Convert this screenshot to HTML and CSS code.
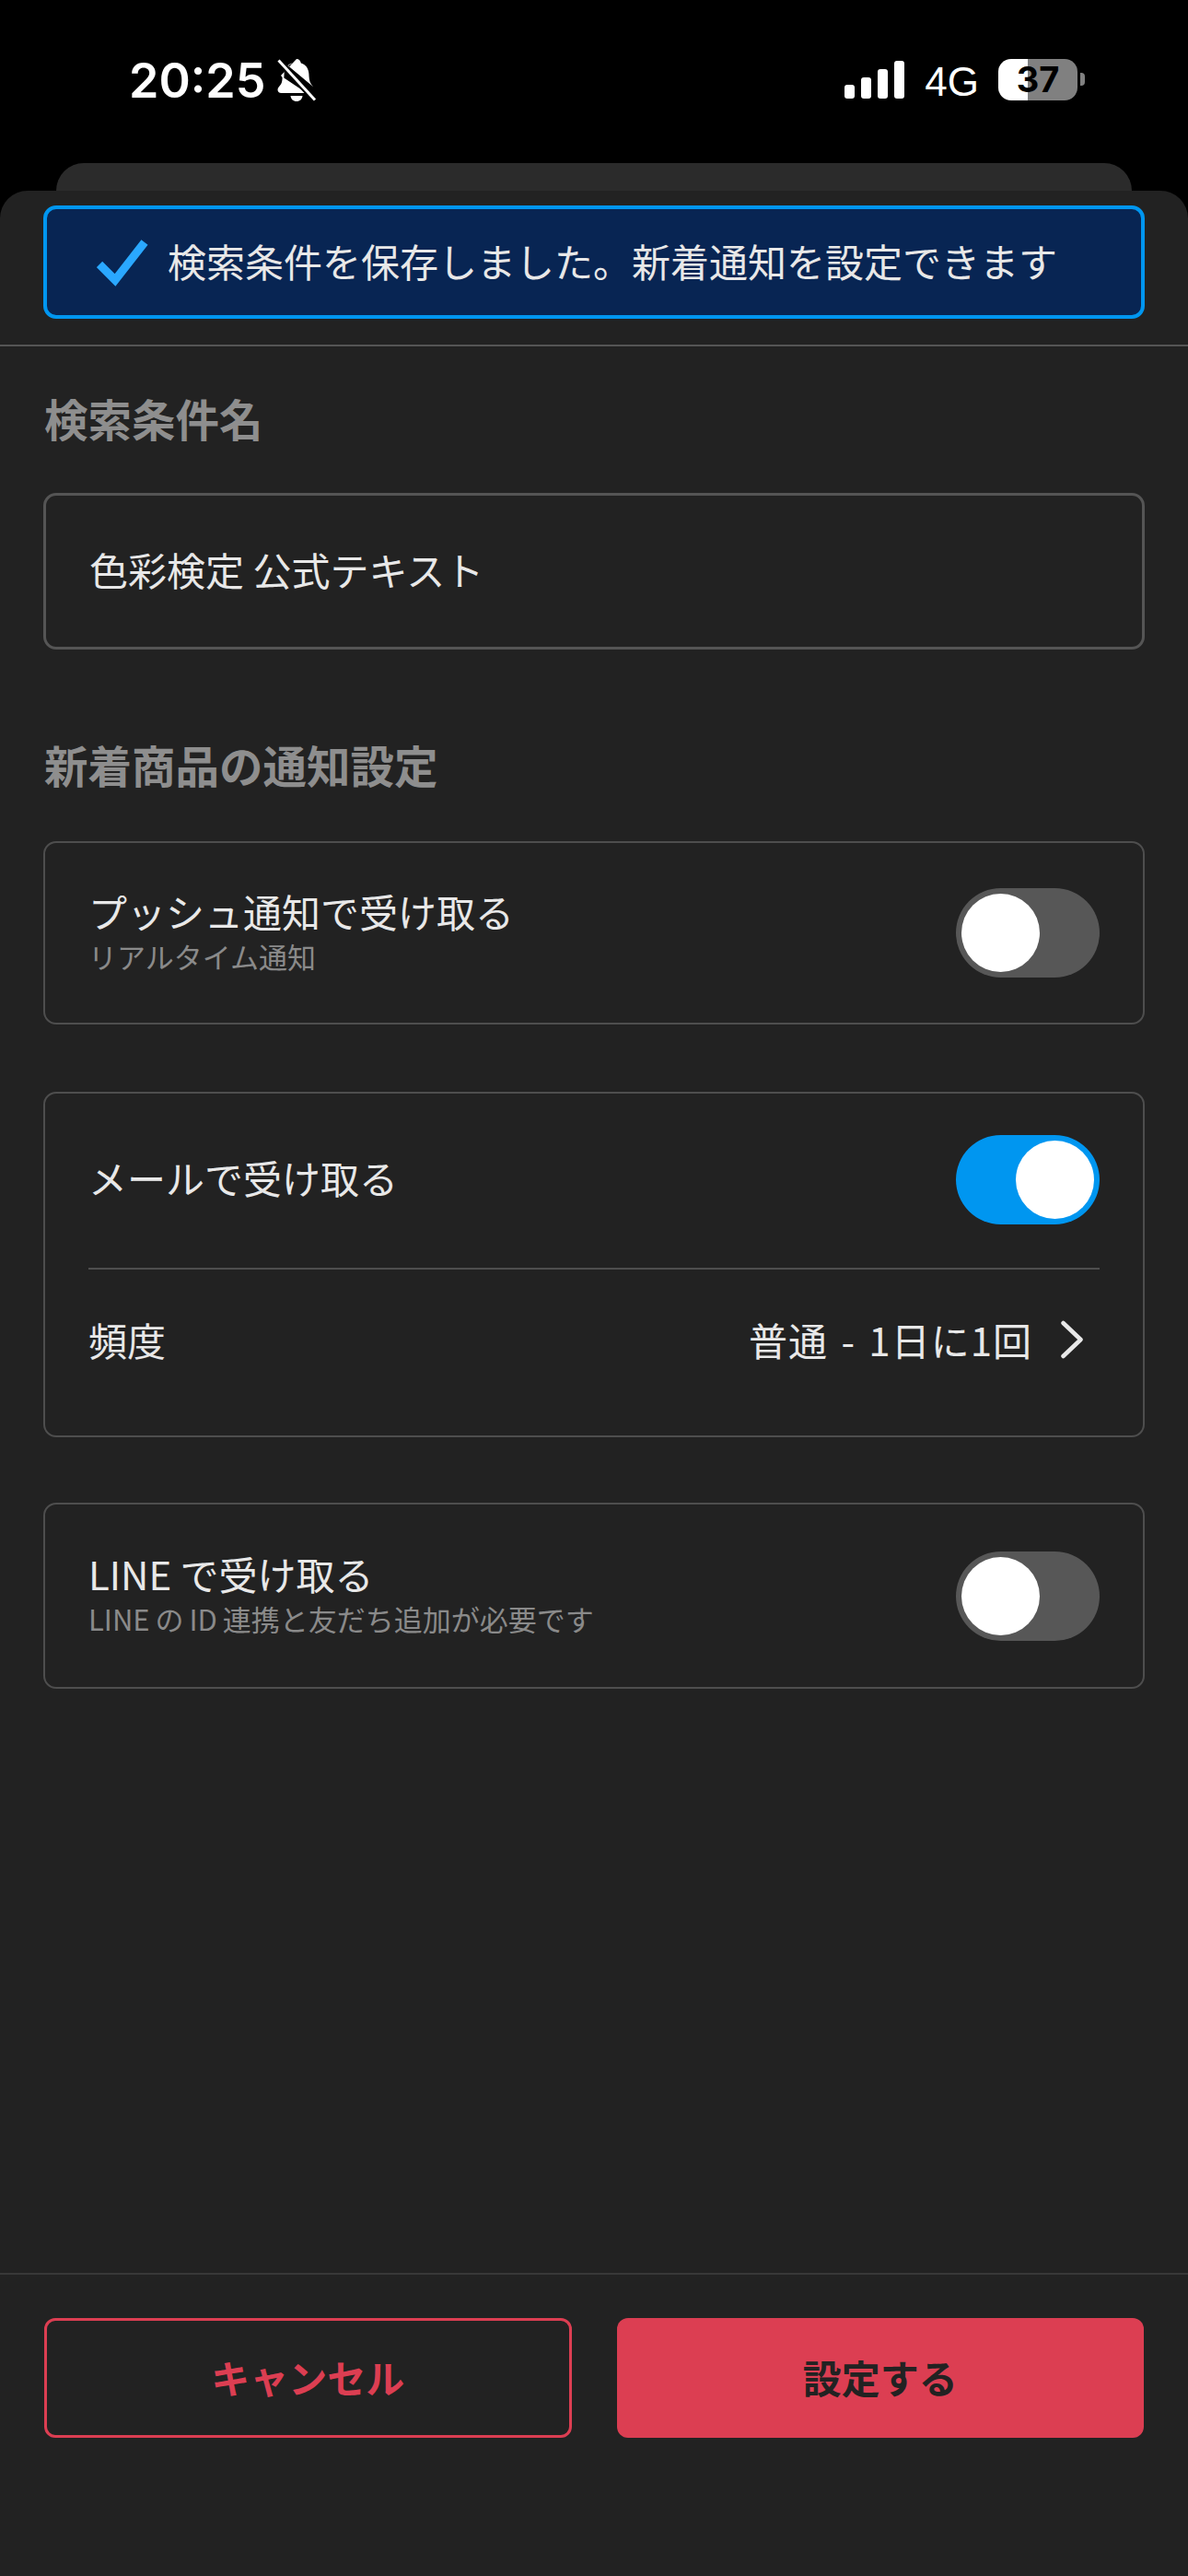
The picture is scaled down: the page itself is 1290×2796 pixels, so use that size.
FILE: index.html
```html
<!DOCTYPE html>
<html lang="ja">
<head>
    <meta charset="UTF-8">
    <meta name="viewport" content="width=device-width, initial-scale=1.0">
    <title>通知設定</title>
    <link rel="stylesheet" href="styles.css">
</head>
<body>
    <div class="status-bar">
        <div class="status-left">
            <span class="time">20:25</span>
            <svg class="bell" viewBox="0 0 44 48" width="44" height="48">
                <path d="M22 1c-2.600 0-4.400 2-4.800 4.400C11.600 7 9 11.400 8.600 17l-.3 4.400L33 38H5.500C3 38 1.500 36.400 1.500 34.500c0-2.400 2-3.900 3.500-6 1.200-1.800 1.500-4.500 1.600-7.500L5 19z M13 8.500C15.500 6.500 17 6 17.200 5.400 17.600 3 19.400 1 22 1s4.400 2 4.800 4.400C32.400 7 35 11.400 35.400 17c.2 4 .4 8 2.200 11 .8 1.300 1.800 2.300 2.600 3.300z" fill="#fff"/>
                <path d="M15.500 41h13c-.4 3.800-3 6-6.500 6s-6.100-2.200-6.500-6z" fill="#fff"/>
                <path d="M2.500 2.500 42 45.500" stroke="#000" stroke-width="7"/>
                <path d="M2.500 2.500 42 45.500" stroke="#fff" stroke-width="3"/>
            </svg>
        </div>
        <div class="status-right">
            <div class="signal">
                <span class="bar bar-1"></span>
                <span class="bar bar-2"></span>
                <span class="bar bar-3"></span>
                <span class="bar bar-4"></span>
            </div>
            <span class="network">4G</span>
            <div class="battery"><span class="battery-text">37</span></div>
            <span class="battery-nub"></span>
        </div>
    </div>

    <div class="back-sheet"></div>

    <div class="sheet">
        <div class="banner-wrap">
            <div class="banner">
                <svg class="check" viewBox="0 0 56 52" width="56" height="52">
                    <path d="M3 28 20 45 52 4" fill="none" stroke="#2aa8ff" stroke-width="9"/>
                </svg>
                <span class="banner-text">検索条件を保存しました。新着通知を設定できます</span>
            </div>
        </div>

        <div class="content">
            <h2 class="heading">検索条件名</h2>
            <div class="name-box">色彩検定 公式テキスト</div>

            <h2 class="heading heading-second">新着商品の通知設定</h2>

            <div class="card card-single">
                <div class="row-text">
                    <div class="label">プッシュ通知で受け取る</div>
                    <div class="sub">リアルタイム通知</div>
                </div>
                <div class="toggle"><span class="knob"></span></div>
            </div>

            <div class="card card-mail">
                <div class="mail-row">
                    <div class="label">メールで受け取る</div>
                    <div class="toggle on"><span class="knob"></span></div>
                </div>
                <div class="freq-row">
                    <div class="label">頻度</div>
                    <div class="freq-value">
                        <span class="freq-text">普通 - 1日に1回</span>
                        <svg class="chevron" viewBox="0 0 26 42" width="26" height="42">
                            <path d="M3.500 3 22.500 21 3.500 39" fill="none" stroke="#e8e8e8" stroke-width="4.500" stroke-linecap="round" stroke-linejoin="round"/>
                        </svg>
                    </div>
                </div>
            </div>

            <div class="card card-single card-line">
                <div class="row-text">
                    <div class="label">LINE で受け取る</div>
                    <div class="sub sub-line">LINE の ID 連携と友だち追加が必要です</div>
                </div>
                <div class="toggle"><span class="knob"></span></div>
            </div>
        </div>

        <div class="footer">
            <button class="button button-outline">キャンセル</button>
            <button class="button button-fill">設定する</button>
        </div>
    </div>
</body>
</html>
```

FILE: styles.css
```css
* {
    box-sizing: border-box;
}
body {
    margin: 0;
    width: 1290px;
    height: 2796px;
    display: flex;
    flex-direction: column;
    background-color: #000;
    color: #e8e8e8;
    font-family: "Noto Sans CJK JP", "Noto Sans", sans-serif;
    overflow: hidden;
}
.status-bar {
    height: 177px;
    flex: none;
    display: flex;
    justify-content: space-between;
    padding: 62px 0 0 140px;
    color: #fff;
}
.status-left {
    display: flex;
    align-items: flex-start;
    gap: 12px;
}
.time {
    font-family: Inter, sans-serif;
    font-size: 52px;
    font-weight: 600;
    line-height: 52px;
}
.bell {
    margin-top: 1px;
}
.status-right {
    display: flex;
    align-items: flex-start;
    padding-right: 112px;
}
.signal {
    display: flex;
    align-items: flex-end;
    gap: 7px;
    height: 41px;
    margin: 4px 22px 0 0;
}
.bar {
    width: 11px;
    background-color: #fff;
    border-radius: 3px;
}
.bar-1 { height: 15px; }
.bar-2 { height: 23px; }
.bar-3 { height: 32px; }
.bar-4 { height: 41px; }
.network {
    font-family: "Liberation Sans", sans-serif;
    font-size: 44px;
    line-height: 46px;
    margin: 4px 21px 0 0;
}
.battery {
    width: 86px;
    height: 45px;
    margin-top: 2px;
    border-radius: 14px;
    background: linear-gradient(to right, #fff 32px, #808080 32px);
    color: #000;
    text-align: center;
    font-family: Inter, sans-serif;
    font-size: 38px;
    font-weight: 700;
    line-height: 45px;
}
.battery-nub {
    width: 5px;
    height: 14px;
    margin: 17px 0 0 3px;
    background-color: #808080;
    border-radius: 0 4px 4px 0;
}
.back-sheet {
    height: 30px;
    flex: none;
    margin: 0 61px;
    background-color: #2b2b2b;
    border-radius: 30px 30px 0 0;
}
.sheet {
    flex: 1;
    display: flex;
    flex-direction: column;
    background-color: #222;
    border-radius: 30px 30px 0 0;
}
.banner-wrap {
    padding: 16px 47px 28px;
    border-bottom: 2px solid #555;
}
.banner {
    height: 123px;
    display: flex;
    align-items: center;
    gap: 21px;
    padding-left: 54px;
    background-color: #082553;
    border: 4px solid #0096f0;
    border-radius: 14px;
    font-size: 42px;
}
.banner-text {
    padding-bottom: 4px;
}
.content {
    flex: 1;
    padding: 48px 47px 0 47px;
}
.heading {
    margin: 0 0 51px 1px;
    font-size: 47.5px;
    line-height: 60px;
    font-weight: 700;
    color: #8e8e8e;
}
.heading-second {
    margin: 95px 0 53px 1px;
}
.name-box {
    height: 170px;
    display: flex;
    align-items: center;
    padding: 0 0 6px 47px;
    border: 3px solid #555;
    border-radius: 14px;
    font-size: 42px;
}
.card {
    border: 2px solid #4e4e4e;
    border-radius: 14px;
    padding: 0 47px;
}
.card-single {
    height: 199px;
    display: flex;
    justify-content: space-between;
    align-items: center;
}
.card-mail {
    height: 375px;
    margin: 73px 0 71px;
}
.card-line {
    height: 202px;
}
.row-text {
    margin-bottom: 5px;
}
.card-line .row-text {
    margin-bottom: 7px;
}
.label {
    font-size: 42px;
    line-height: 56px;
}
.sub {
    font-size: 31px;
    line-height: 42px;
    color: #8a8a8a;
}
.sub-line {
    word-spacing: -1px;
}
.mail-row {
    height: 191px;
    display: flex;
    justify-content: space-between;
    align-items: center;
    padding-bottom: 3px;
    border-bottom: 2px solid #4e4e4e;
}
.mail-row .label {
    margin-bottom: 5px;
}
.freq-row {
    height: 156px;
    display: flex;
    justify-content: space-between;
    align-items: center;
    padding-bottom: 5px;
}
.freq-value {
    display: flex;
    align-items: center;
    gap: 30px;
    padding-right: 17px;
    font-size: 42px;
}
.freq-text {
    letter-spacing: 1px;
    word-spacing: 4px;
}
.toggle {
    width: 156px;
    height: 97px;
    display: flex;
    align-items: center;
    padding: 0 6px;
    background-color: #575757;
    border-radius: 49px;
}
.toggle.on {
    justify-content: flex-end;
    background-color: #0096f0;
}
.knob {
    width: 85px;
    height: 85px;
    background-color: #fff;
    border-radius: 50%;
}
.footer {
    height: 329px;
    flex: none;
    display: grid;
    grid-template-columns: 1fr 1fr;
    grid-auto-rows: 130px;
    gap: 49px;
    padding: 47px 48px 0;
    border-top: 2px solid #383838;
}
.button {
    padding: 0 0 3px;
    border-radius: 12px;
    font-family: inherit;
    font-size: 42px;
    font-weight: 700;
}
.button-outline {
    background-color: transparent;
    border: 3px solid #dc3e52;
    color: #dc3e52;
}
.button-fill {
    background-color: #dc3e52;
    border: none;
    color: #222;
}
```
